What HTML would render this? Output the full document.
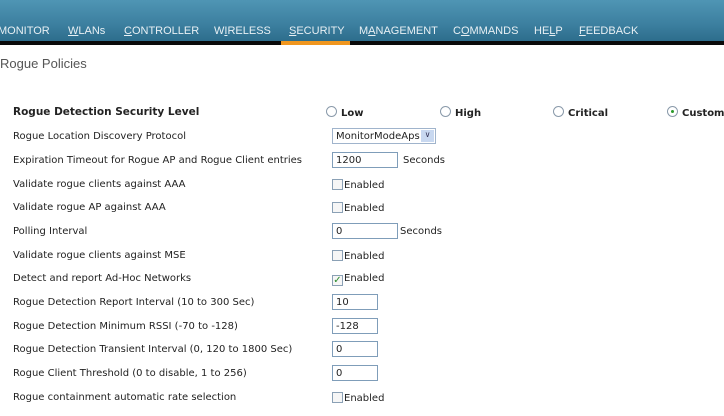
<html><head><style>
body{margin:0;width:724px;height:416px;overflow:hidden;background:#fff;font-family:"DejaVu Sans","Liberation Sans",sans-serif;font-size:10px;color:#222}
.hdr{position:absolute;left:0;top:0;width:724px;height:41px;background:linear-gradient(#4f95b4,#3c7f9f 60%,#2d6d8c)}
.blk{position:absolute;left:0;top:41px;width:724px;height:4px;background:#0a0a0a}
.or{position:absolute;left:281px;top:41px;width:69px;height:4px;background:#f0961e}
.nav{position:absolute;top:25px;font-family:"Liberation Sans",sans-serif;font-size:11px;color:#e8f0f4;white-space:nowrap}
.title{position:absolute;left:0;top:56px;font-family:"Liberation Sans",sans-serif;font-size:13px;color:#555}
.r{position:absolute;left:13px;font-size:10px;color:#222;white-space:nowrap;margin-top:2px}
.inp{position:absolute;height:16px;border:1px solid #7f9db9;box-sizing:border-box;font-size:10px;padding:2px 3px;background:#fff;margin-top:1px}
.cb{display:inline-block;width:11px;height:11px;border:1px solid #8aa0b5;box-sizing:border-box;vertical-align:-2px;margin-right:1px;background:#f6f6f6}
.rad{position:absolute;top:106px;font-weight:bold;font-size:10px;white-space:nowrap}
.rad i{display:inline-block;width:11px;height:11px;border:1px solid #8a9aaa;border-radius:50%;box-sizing:border-box;vertical-align:-1px;margin-right:4px;position:relative}
</style></head><body>
<div class="hdr"></div><div class="blk"></div><div class="or"></div>
<span class="nav" style="left:-2px">MONITOR</span>
<span class="nav" style="left:68px"><u>W</u>LANs</span>
<span class="nav" style="left:124px"><u>C</u>ONTROLLER</span>
<span class="nav" style="left:214px">W<u>I</u>RELESS</span>
<span class="nav" style="left:289px"><u>S</u>ECURITY</span>
<span class="nav" style="left:359px">M<u>A</u>NAGEMENT</span>
<span class="nav" style="left:453px">C<u>O</u>MMANDS</span>
<span class="nav" style="left:534px">HE<u>L</u>P</span>
<span class="nav" style="left:579px"><u>F</u>EEDBACK</span>
<div class="title">Rogue Policies</div>
<div class="r" style="top:104px;font-weight:bold;font-size:10.5px">Rogue Detection Security Level</div>
<div class="rad" style="left:326px"><i></i>Low</div>
<div class="rad" style="left:440px"><i></i>High</div>
<div class="rad" style="left:553px"><i></i>Critical</div>
<div class="rad" style="left:667px"><i><b style="position:absolute;left:3px;top:3px;width:3px;height:3px;background:#2a9a2a;border-radius:50%"></b></i>Custom</div>
<div class="r" style="top:129px">Rogue Location Discovery Protocol</div>
<div class="inp" style="left:332px;top:127px;width:104px;border-color:#a0b4cc">MonitorModeAps <span style="position:absolute;right:1px;top:1px;width:13px;height:12px;background:#c8d8f0;font-size:8px;text-align:center;color:#335">&#8744;</span></div>
<div class="r" style="top:153px">Expiration Timeout for Rogue AP and Rogue Client entries</div>
<div class="inp" style="left:332px;top:151px;width:66px">1200</div><div class="r" style="left:403px;top:153px">Seconds</div>
<div class="r" style="top:177px">Validate rogue clients against AAA</div><div class="r" style="left:332px;top:177px"><span class="cb"></span>Enabled</div>
<div class="r" style="top:200px">Validate rogue AP against AAA</div><div class="r" style="left:332px;top:200px"><span class="cb"></span>Enabled</div>
<div class="r" style="top:224px">Polling Interval</div>
<div class="inp" style="left:332px;top:222px;width:66px">0</div><div class="r" style="left:400px;top:224px">Seconds</div>
<div class="r" style="top:248px">Validate rogue clients against MSE</div><div class="r" style="left:332px;top:248px"><span class="cb"></span>Enabled</div>
<div class="r" style="top:271px">Detect and report Ad-Hoc Networks</div><div class="r" style="left:332px;top:271px"><span class="cb" style="color:#2a8a2a;font-size:10px;line-height:9px;text-align:center">&#10003;</span>Enabled</div>
<div class="r" style="top:295px">Rogue Detection Report Interval (10 to 300 Sec)</div><div class="inp" style="left:332px;top:293px;width:46px">10</div>
<div class="r" style="top:319px">Rogue Detection Minimum RSSI (-70 to -128)</div><div class="inp" style="left:332px;top:317px;width:46px">-128</div>
<div class="r" style="top:342px">Rogue Detection Transient Interval (0, 120 to 1800 Sec)</div><div class="inp" style="left:332px;top:340px;width:46px">0</div>
<div class="r" style="top:366px">Rogue Client Threshold (0 to disable, 1 to 256)</div><div class="inp" style="left:332px;top:364px;width:46px">0</div>
<div class="r" style="top:390px">Rogue containment automatic rate selection</div><div class="r" style="left:332px;top:390px"><span class="cb"></span>Enabled</div>
</body></html>
